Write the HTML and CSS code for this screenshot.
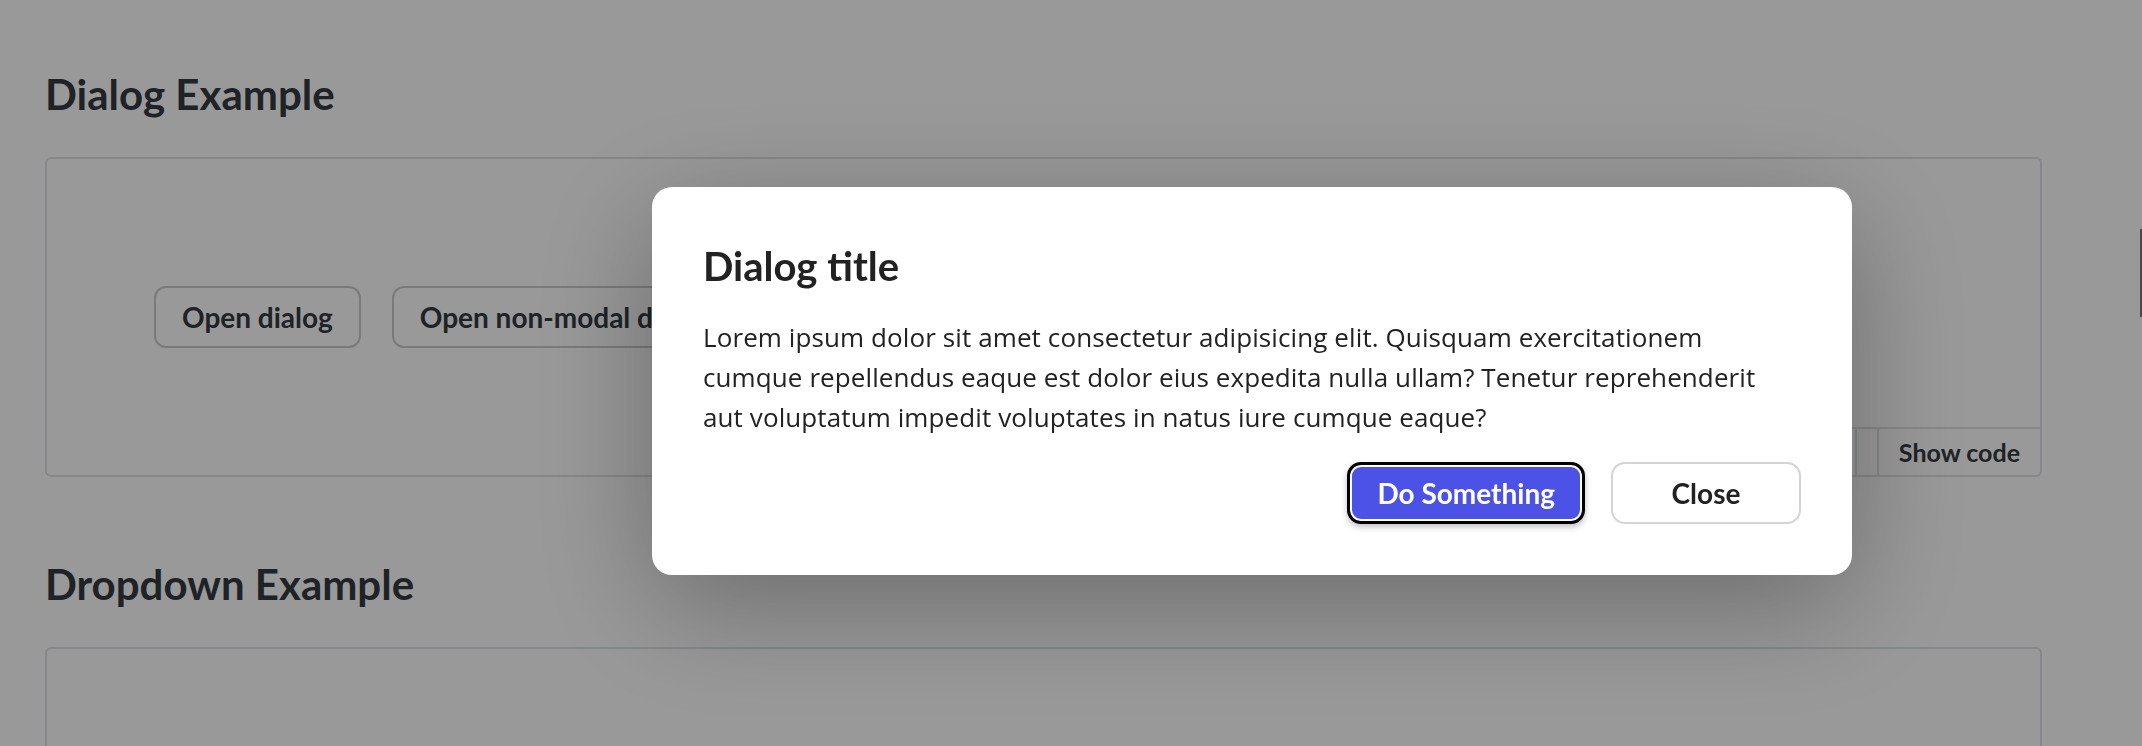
FILE: index.html
```html
<!DOCTYPE html>
<html lang="en">
<head>
    <meta charset="UTF-8">
    <meta name="viewport" content="width=device-width, initial-scale=1.0">
    <title>Components - Dialog Example</title>
    <link rel="stylesheet" href="styles.css">
</head>
<body>
    <main class="page">
        <section class="example">
            <h2 class="example-title">Dialog Example</h2>
            <div class="example-card">
                <div class="demo">
                    <button class="btn">Open dialog</button>
                    <button class="btn">Open non-modal dialog</button>
                </div>
                <div class="toolbar">
                    <button class="tool-btn">Copy code</button>
                    <button class="tool-btn">Show code</button>
                </div>
            </div>
        </section>

        <section class="example">
            <h2 class="example-title">Dropdown Example</h2>
            <div class="example-card"></div>
        </section>
    </main>

    <div class="backdrop">
        <div class="dialog" role="dialog" aria-labelledby="dialogTitle">
            <h3 id="dialogTitle" class="dialog-title">Dialog title</h3>
            <p class="dialog-text">Lorem ipsum dolor sit amet consectetur adipisicing elit. Quisquam exercitationem cumque repellendus eaque est dolor eius expedita nulla ullam? Tenetur reprehenderit aut voluptatum impedit voluptates in natus iure cumque eaque?</p>
            <div class="dialog-actions">
                <button class="dialog-btn primary">Do Something</button>
                <button class="dialog-btn secondary">Close</button>
            </div>
        </div>
    </div>

    <div class="scroll-thumb"></div>
</body>
</html>
```

FILE: styles.css
```css
* {
    margin: 0;
    padding: 0;
    box-sizing: border-box;
}

html, body {
    height: 100%;
    overflow: hidden;
}

body {
    background-color: #fff;
    color: #343a40;
    font-family: Lato, "Liberation Sans", sans-serif;
}

.page {
    padding: 70px 100px 0 45px;
}

.example + .example {
    margin-top: 83px;
}

.example-title {
    font-size: 42px;
    line-height: 48px;
    font-weight: 700;
    margin-bottom: 39px;
}

.example-card {
    height: 320px;
    border: 2px solid #dee2e6;
    border-radius: 6px;
    display: grid;
    grid-template-rows: 1fr 48px;
}

.demo {
    grid-row: 1 / 3;
    grid-column: 1;
    display: flex;
    align-items: center;
    gap: 31px;
    padding-left: 107px;
}

.btn {
    height: 62px;
    padding: 0 26px;
    border: 2px solid #ccc;
    border-radius: 12px;
    background-color: #fff;
    color: #343a40;
    font-family: inherit;
    font-size: 28px;
    font-weight: 700;
}

.toolbar {
    grid-row: 2;
    grid-column: 1;
    justify-self: end;
    display: flex;
    gap: 20px;
    border-top: 2px solid #dee2e6;
}

.tool-btn {
    padding: 0 20px;
    border: none;
    border-left: 2px solid #dee2e6;
    border-right: 2px solid #dee2e6;
    background: none;
    color: #343a40;
    font-family: inherit;
    font-size: 25px;
    font-weight: 700;
    line-height: 46px;
}

.tool-btn:last-child {
    border-right: none;
}

/* modal */
.backdrop {
    position: fixed;
    inset: 0;
    background-color: rgba(0, 0, 0, 0.4);
}

.dialog {
    position: absolute;
    left: 652px;
    top: 187px;
    width: 1200px;
    padding: 55px 51px 51px;
    background-color: #fff;
    border-radius: 20px;
    box-shadow: 0 30px 120px rgba(0, 0, 0, 0.3);
    color: #222;
}

.dialog-title {
    font-size: 40px;
    line-height: 48px;
    font-weight: 700;
    margin-bottom: 27px;
}

.dialog-text {
    max-width: 1062px;
    font-family: "Open Sans", Lato, sans-serif;
    font-size: 26px;
    letter-spacing: 0.1px;
    line-height: 40px;
    margin-bottom: 25px;
}

.dialog-actions {
    display: flex;
    justify-content: flex-end;
    gap: 26px;
}

.dialog-btn {
    height: 62px;
    min-width: 190px;
    padding: 0 27px;
    border-radius: 14px;
    font-family: inherit;
    font-size: 28px;
    font-weight: 700;
}

.primary {
    background-color: #4b52e5;
    color: #fff;
    border: 3px solid #000;
    box-shadow: inset 0 0 0 2px #fff, 0 3px 6px rgba(0, 0, 0, 0.25);
}

.secondary {
    background-color: #fff;
    color: #222;
    border: 2px solid #d4d4d4;
}

.scroll-thumb {
    position: fixed;
    top: 229px;
    right: 0;
    width: 2px;
    height: 88px;
    background-color: #4a4a4a;
}
```
